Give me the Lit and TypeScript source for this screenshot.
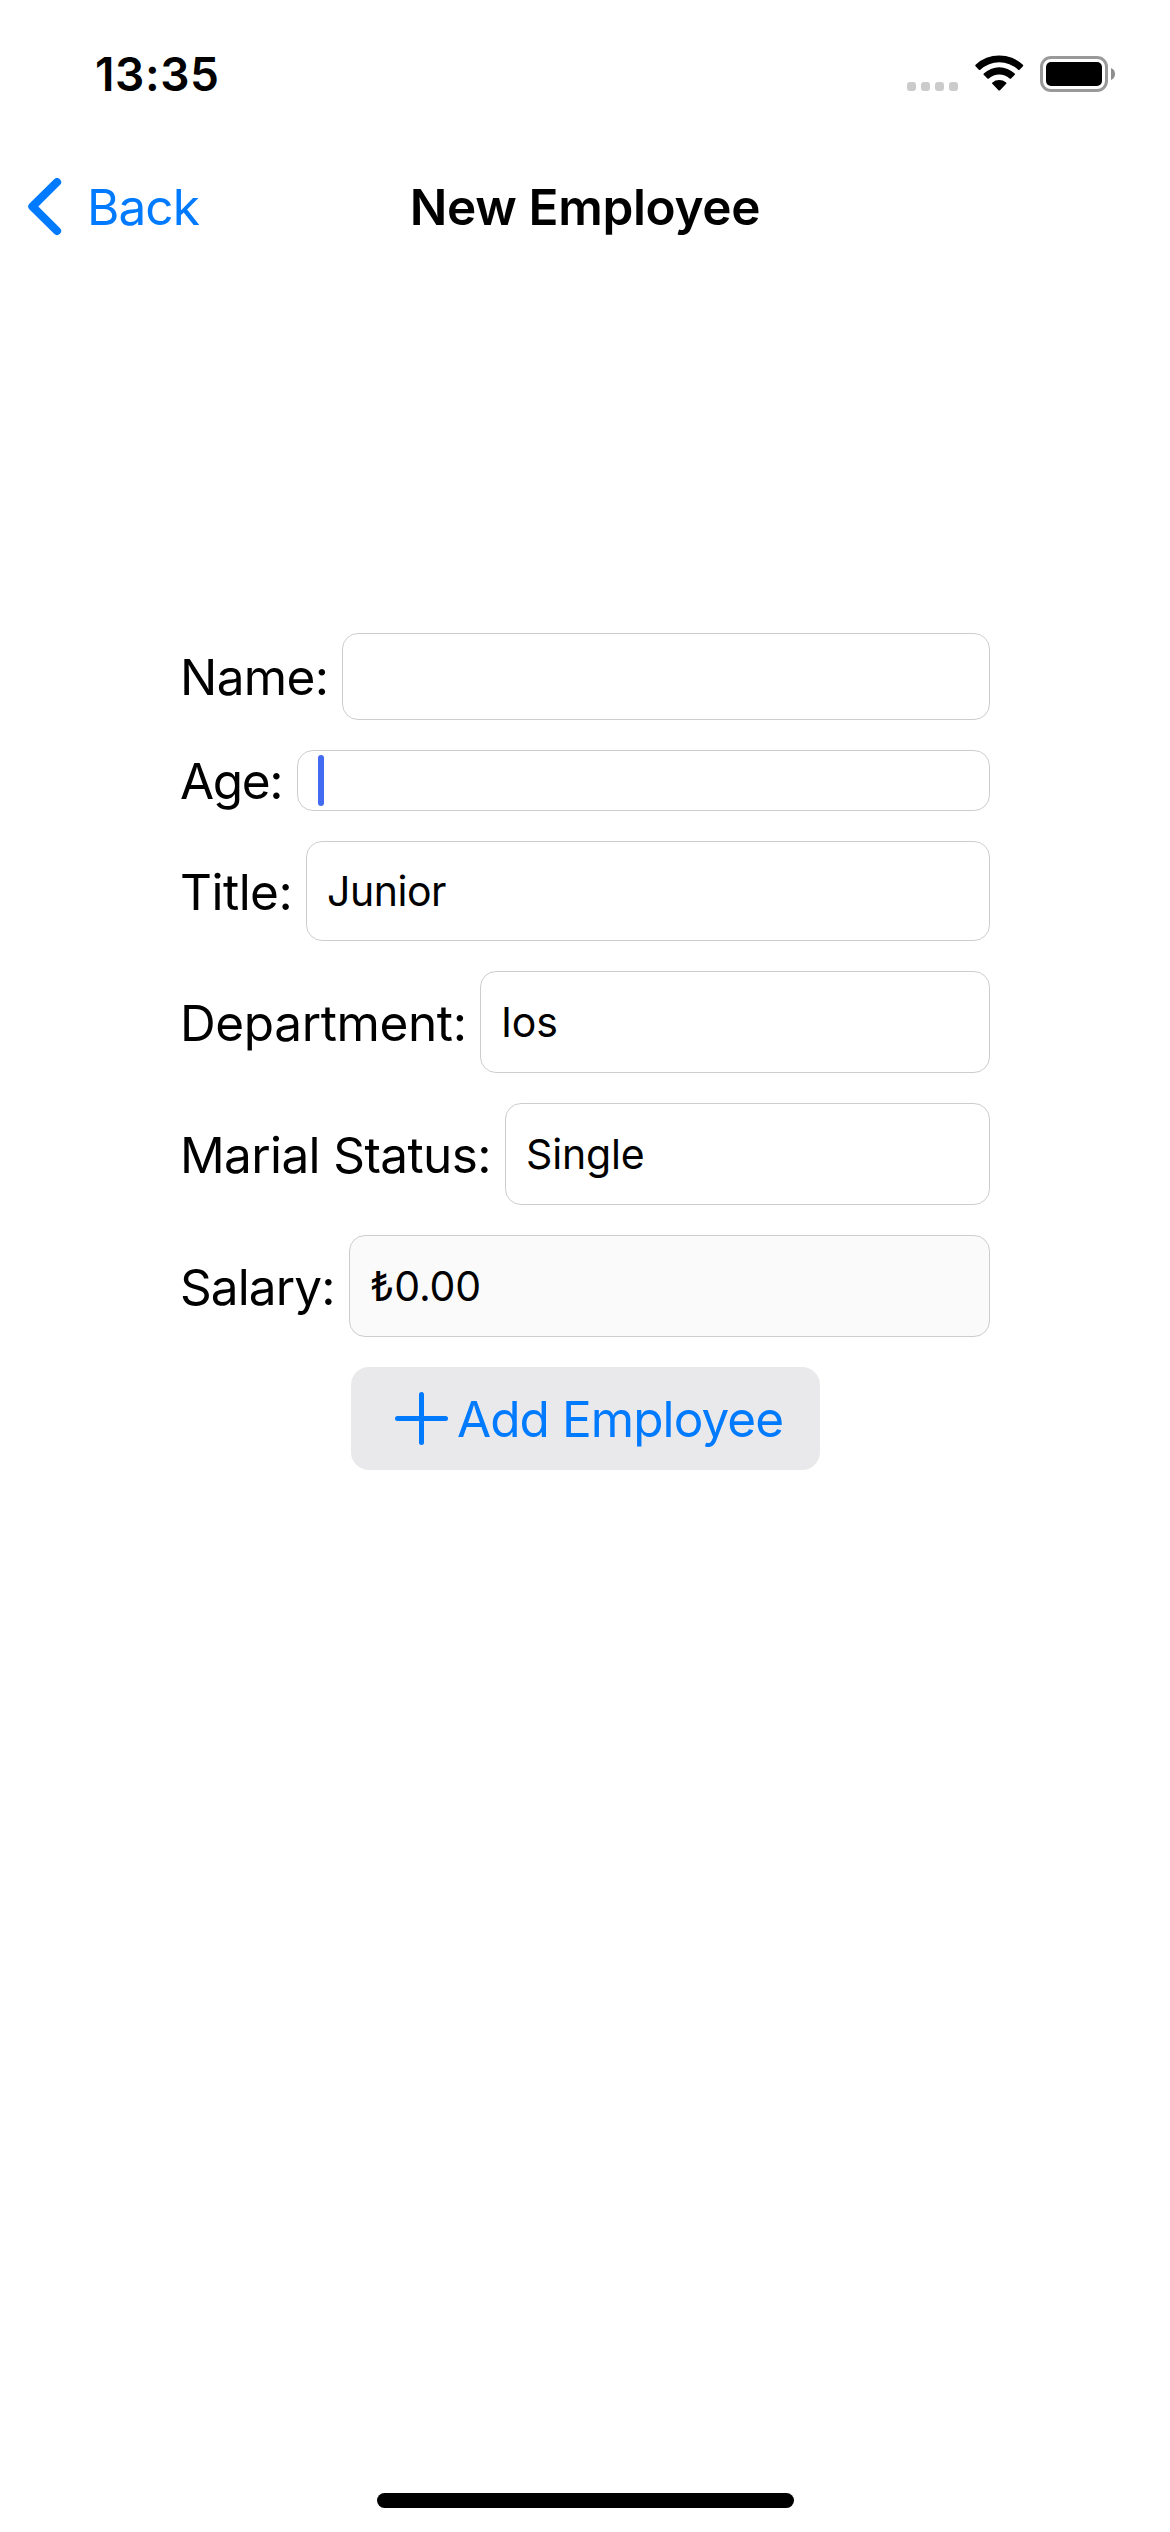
import { LitElement, html, css } from "lit";
import { customElement, state } from "lit/decorators.js";
import { classMap } from "lit/directives/class-map.js";

interface Field {
  key: string;
  label: string;
  value: string;
  focused?: boolean;
}

@customElement("status-bar")
class StatusBar extends LitElement {
  static styles = css`
    :host {
      display: flex;
      justify-content: space-between;
      height: 141px;
      padding: 0 55px 0 95px;
      box-sizing: border-box;
    }
    .time {
      margin-top: 46px;
      font-size: 46px;
      font-weight: 600;
      line-height: 56px;
      letter-spacing: 0.6px;
    }
    .icons {
      display: flex;
      align-items: flex-end;
      height: 92px;
    }
    .dots {
      display: flex;
      gap: 5px;
      margin: 0 17px 1px 0;
    }
    .dot {
      width: 9px;
      height: 9px;
      border-radius: 3px;
      background: #cbcbcb;
    }
    .wifi {
      display: block;
      margin: 0 16px 1px 0;
    }
    .battery {
      display: block;
    }
  `;

  render() {
    return html`
      <div class="time">13:35</div>
      <div class="icons">
        <div class="dots">
          <span class="dot"></span><span class="dot"></span><span class="dot"></span><span class="dot"></span>
        </div>
        <svg class="wifi" width="49" height="36" viewBox="0 0 49 36">
          <path d="M0.5 11.2 Q-0.1 10.5 0.6 9.8 A34.5 34.5 0 0 1 47.9 9.8 Q48.6 10.5 48 11.2 L44.6 14.7 Q43.9 15.4 43.1 14.7 A27.6 27.6 0 0 0 5.4 14.7 Q4.6 15.4 3.9 14.7 Z" />
          <path d="M8.7 19.8 Q8 19.1 8.8 18.4 A22.6 22.6 0 0 1 39.7 18.4 Q40.5 19.1 39.8 19.8 L36.1 23.4 Q35.4 24.1 34.6 23.4 A15.6 15.6 0 0 0 13.9 23.4 Q13.1 24.1 12.4 23.4 Z" />
          <path d="M17.3 28.7 Q16.6 28 17.4 27.4 A11 11 0 0 1 31.1 27.4 Q31.9 28 31.2 28.7 L25 35.2 Q24.25 36 23.5 35.2 Z" />
        </svg>
        <svg class="battery" width="75" height="36" viewBox="0 0 75 36">
          <rect x="1.5" y="1.5" width="65" height="33" rx="9.5" fill="none" stroke="#999" stroke-width="3" />
          <rect x="6" y="6" width="56" height="24" rx="5" />
          <path d="M71 12 C73.6 13 75 15.3 75 18 S73.6 23 71 24 Z" fill="#8e8e8e" />
        </svg>
      </div>
    `;
  }
}

@customElement("nav-bar")
class NavBar extends LitElement {
  static styles = css`
    :host {
      display: grid;
      grid-template-columns: 1fr auto 1fr;
      align-items: center;
      height: 132px;
      padding: 0 28px;
      box-sizing: border-box;
      font-size: 49.5px;
      line-height: 60px;
    }
    .back {
      display: flex;
      align-items: center;
      gap: 25px;
      color: #007aff;
      letter-spacing: -0.93px;
    }
    .chevron {
      display: block;
    }
    .title {
      font-weight: 600;
      letter-spacing: -0.33px;
    }
  `;

  render() {
    return html`
      <div class="back">
        <svg class="chevron" width="34" height="58" viewBox="0 0 34 58">
          <path d="M29 4.2 L4.4 28.5 L29 52.8" fill="none" stroke="#007aff" stroke-width="8.2" stroke-linecap="round" stroke-linejoin="round" />
        </svg>
        <span>Back</span>
      </div>
      <div class="title">New Employee</div>
    `;
  }
}

@customElement("app-root")
class AppRoot extends LitElement {
  static styles = css`
    :host {
      display: flex;
      flex-direction: column;
      width: 1170px;
      height: 2532px;
      box-sizing: border-box;
      overflow: hidden;
      background: #fff;
      color: #000;
      font-family: Inter, "Liberation Sans", sans-serif;
    }
    .form {
      display: flex;
      flex-direction: column;
      gap: 30px;
      flex: 1;
      padding: 360px 180px 0;
    }
    .row {
      display: flex;
      align-items: center;
      height: 102px;
    }
    .label {
      flex: none;
      padding-top: 2px;
      font-size: 49.5px;
      line-height: 60px;
      white-space: nowrap;
    }
    .field {
      display: flex;
      align-items: center;
      flex: 1;
      height: 100%;
      padding-left: 20px;
      box-sizing: border-box;
      border: 1px solid #cdcdcf;
      border-radius: 16px;
      font-size: 41px;
      line-height: 50px;
      letter-spacing: -0.15px;
    }
    .row.name { height: 87px; }
    .row.age { height: 61px; }
    .row.title { height: 100px; }
    .name .label { width: 162px; padding-top: 0; letter-spacing: -0.63px; }
    .age .label { width: 117px; padding-top: 0; letter-spacing: -1.4px; }
    .title .label { width: 126px; letter-spacing: -0.5px; }
    .department .label { width: 300px; letter-spacing: -0.38px; }
    .status .label { width: 325px; letter-spacing: -0.62px; }
    .salary .label { width: 169px; letter-spacing: -0.9px; }
    .title .field { letter-spacing: -0.48px; }
    .salary .field { background: #fafafa; }
    .caret {
      width: 6px;
      height: 51px;
      border-radius: 3px;
      background: #426bf2;
    }
    .add {
      display: flex;
      align-items: center;
      align-self: center;
      width: 469px;
      height: 103px;
      margin-left: 1px;
      padding: 0 0 0 44px;
      box-sizing: border-box;
      border: 0;
      border-radius: 18px;
      background: #e9e9eb;
      color: #007aff;
      font: inherit;
      font-size: 49.5px;
      line-height: 60px;
      letter-spacing: -0.93px;
      white-space: nowrap;
    }
    .plus {
      flex: none;
      margin-right: 9px;
    }
    .home {
      align-self: center;
      width: 417px;
      height: 15px;
      margin: 0 0 24px 1px;
      border-radius: 7.5px;
      background: #000;
    }
  `;

  @state()
  private fields: Field[] = [
    { key: "name", label: "Name:", value: "" },
    { key: "age", label: "Age:", value: "", focused: true },
    { key: "title", label: "Title:", value: "Junior" },
    { key: "department", label: "Department:", value: "Ios" },
    { key: "status", label: "Marial Status:", value: "Single" },
    { key: "salary", label: "Salary:", value: "₺0.00" },
  ];

  render() {
    return html`
      <status-bar></status-bar>
      <nav-bar></nav-bar>
      <div class="form">
        ${this.fields.map(
          (f) => html`
            <div class=${classMap({ row: true, [f.key]: true })}>
              <div class="label">${f.label}</div>
              <div class="field">${f.focused ? html`<span class="caret"></span>` : f.value}</div>
            </div>
          `
        )}
        <button class="add">
          <svg class="plus" width="53" height="53" viewBox="0 0 53 53">
            <path d="M26.5 2.5 V50.5 M2.5 26.5 H50.5" fill="none" stroke="#007aff" stroke-width="5" stroke-linecap="round" />
          </svg>
          <span>Add Employee</span>
        </button>
      </div>
      <div class="home"></div>
    `;
  }
}
